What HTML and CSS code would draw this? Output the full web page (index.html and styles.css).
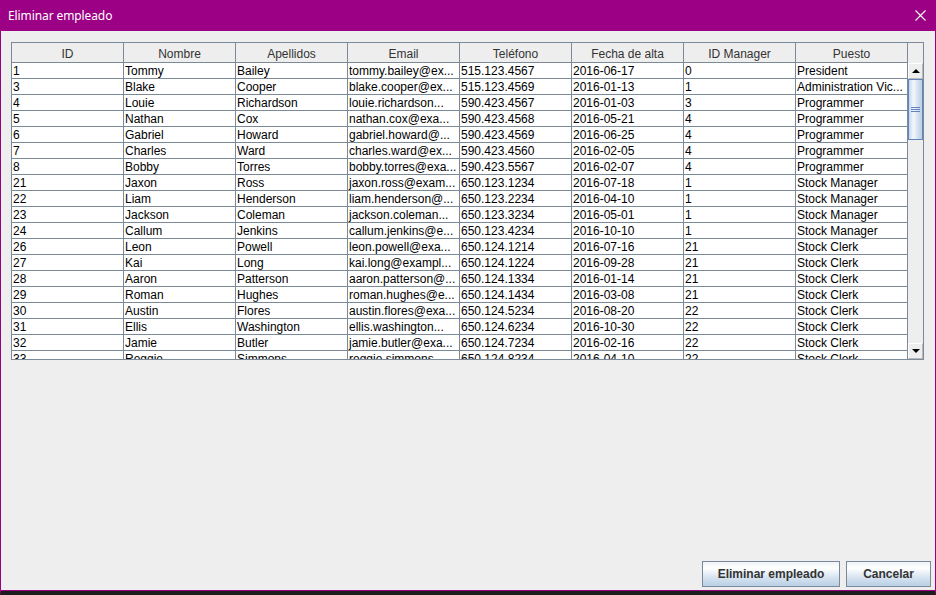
FILE: index.html
```html
<!DOCTYPE html>
<html lang="es">
<head>
<meta charset="utf-8">
<title>Eliminar empleado</title>
<link rel="stylesheet" href="styles.css">
</head>
<body>
<div class="window">
  <div class="titlebar">
    <span class="title">Eliminar empleado</span>
    <svg class="close" width="11" height="11" viewBox="0 0 11 11"><path d="M0.5 0.5 L10.5 10.5 M10.5 0.5 L0.5 10.5" stroke="#fff" stroke-width="1.1" fill="none"/></svg>
  </div>
  <div class="content">
    <div class="pane">
      <div class="pane-head">
        <div class="thead">
          <div class="th">ID</div><div class="th">Nombre</div><div class="th">Apellidos</div><div class="th">Email</div><div class="th">Teléfono</div><div class="th">Fecha de alta</div><div class="th">ID Manager</div><div class="th">Puesto</div>
        </div>
        <div class="corner"></div>
      </div>
      <div class="pane-body">
        <div class="viewport">
          <div class="tbody">
            <div class="td">1</div><div class="td">Tommy</div><div class="td">Bailey</div><div class="td">tommy.bailey@ex...</div><div class="td">515.123.4567</div><div class="td">2016-06-17</div><div class="td">0</div><div class="td">President</div>
            <div class="td">3</div><div class="td">Blake</div><div class="td">Cooper</div><div class="td">blake.cooper@ex...</div><div class="td">515.123.4569</div><div class="td">2016-01-13</div><div class="td">1</div><div class="td">Administration Vic...</div>
            <div class="td">4</div><div class="td">Louie</div><div class="td">Richardson</div><div class="td">louie.richardson...</div><div class="td">590.423.4567</div><div class="td">2016-01-03</div><div class="td">3</div><div class="td">Programmer</div>
            <div class="td">5</div><div class="td">Nathan</div><div class="td">Cox</div><div class="td">nathan.cox@exa...</div><div class="td">590.423.4568</div><div class="td">2016-05-21</div><div class="td">4</div><div class="td">Programmer</div>
            <div class="td">6</div><div class="td">Gabriel</div><div class="td">Howard</div><div class="td">gabriel.howard@...</div><div class="td">590.423.4569</div><div class="td">2016-06-25</div><div class="td">4</div><div class="td">Programmer</div>
            <div class="td">7</div><div class="td">Charles</div><div class="td">Ward</div><div class="td">charles.ward@ex...</div><div class="td">590.423.4560</div><div class="td">2016-02-05</div><div class="td">4</div><div class="td">Programmer</div>
            <div class="td">8</div><div class="td">Bobby</div><div class="td">Torres</div><div class="td">bobby.torres@exa...</div><div class="td">590.423.5567</div><div class="td">2016-02-07</div><div class="td">4</div><div class="td">Programmer</div>
            <div class="td">21</div><div class="td">Jaxon</div><div class="td">Ross</div><div class="td">jaxon.ross@exam...</div><div class="td">650.123.1234</div><div class="td">2016-07-18</div><div class="td">1</div><div class="td">Stock Manager</div>
            <div class="td">22</div><div class="td">Liam</div><div class="td">Henderson</div><div class="td">liam.henderson@...</div><div class="td">650.123.2234</div><div class="td">2016-04-10</div><div class="td">1</div><div class="td">Stock Manager</div>
            <div class="td">23</div><div class="td">Jackson</div><div class="td">Coleman</div><div class="td">jackson.coleman...</div><div class="td">650.123.3234</div><div class="td">2016-05-01</div><div class="td">1</div><div class="td">Stock Manager</div>
            <div class="td">24</div><div class="td">Callum</div><div class="td">Jenkins</div><div class="td">callum.jenkins@e...</div><div class="td">650.123.4234</div><div class="td">2016-10-10</div><div class="td">1</div><div class="td">Stock Manager</div>
            <div class="td">26</div><div class="td">Leon</div><div class="td">Powell</div><div class="td">leon.powell@exa...</div><div class="td">650.124.1214</div><div class="td">2016-07-16</div><div class="td">21</div><div class="td">Stock Clerk</div>
            <div class="td">27</div><div class="td">Kai</div><div class="td">Long</div><div class="td">kai.long@exampl...</div><div class="td">650.124.1224</div><div class="td">2016-09-28</div><div class="td">21</div><div class="td">Stock Clerk</div>
            <div class="td">28</div><div class="td">Aaron</div><div class="td">Patterson</div><div class="td">aaron.patterson@...</div><div class="td">650.124.1334</div><div class="td">2016-01-14</div><div class="td">21</div><div class="td">Stock Clerk</div>
            <div class="td">29</div><div class="td">Roman</div><div class="td">Hughes</div><div class="td">roman.hughes@e...</div><div class="td">650.124.1434</div><div class="td">2016-03-08</div><div class="td">21</div><div class="td">Stock Clerk</div>
            <div class="td">30</div><div class="td">Austin</div><div class="td">Flores</div><div class="td">austin.flores@exa...</div><div class="td">650.124.5234</div><div class="td">2016-08-20</div><div class="td">22</div><div class="td">Stock Clerk</div>
            <div class="td">31</div><div class="td">Ellis</div><div class="td">Washington</div><div class="td">ellis.washington...</div><div class="td">650.124.6234</div><div class="td">2016-10-30</div><div class="td">22</div><div class="td">Stock Clerk</div>
            <div class="td">32</div><div class="td">Jamie</div><div class="td">Butler</div><div class="td">jamie.butler@exa...</div><div class="td">650.124.7234</div><div class="td">2016-02-16</div><div class="td">22</div><div class="td">Stock Clerk</div>
            <div class="td">33</div><div class="td">Reggie</div><div class="td">Simmons</div><div class="td">reggie.simmons...</div><div class="td">650.124.8234</div><div class="td">2016-04-10</div><div class="td">22</div><div class="td">Stock Clerk</div>
          </div>
        </div>
        <div class="vscroll">
          <div class="sb-btn"><span class="tri up"></span></div>
          <div class="track">
            <div class="thumb"><span class="grip"></span></div>
          </div>
          <div class="sb-btn"><span class="tri down"></span></div>
        </div>
      </div>
    </div>
    <div class="actions">
      <button class="btn btn-wide">Eliminar empleado</button>
      <button class="btn btn-cancel">Cancelar</button>
    </div>
  </div>
</div>
</body>
</html>
```

FILE: styles.css
```css
* { box-sizing: border-box; }
html, body { margin: 0; padding: 0; }
body {
  width: 936px;
  height: 595px;
  overflow: hidden;
  background: #eeeeee;
  font-family: "Liberation Sans", Arial, sans-serif;
  font-size: 12px;
  color: #000;
}
.window {
  width: 936px;
  height: 595px;
  display: flex;
  flex-direction: column;
  border-left: 1px solid #9b0085;
  border-right: 1px solid #9b0085;
  border-bottom: 4px solid #1c1c1c;
}
.titlebar {
  height: 31px;
  flex: none;
  background: #9b0085;
  display: flex;
  align-items: center;
  justify-content: space-between;
  padding: 0 10px 1px 8px;
  margin: 0 -1px;
}
.title {
  color: #fff;
  font-family: "Noto Sans", "Open Sans", sans-serif;
  font-size: 12px;
  letter-spacing: -0.1px;
}
.close { display: block; margin-top: 1px; }
.content {
  flex: 1;
  display: flex;
  flex-direction: column;
  justify-content: space-between;
  padding: 11px 4px 4px 10px;
  background: #eeeeee;
  box-shadow: inset 0 -1px 0 #9b0085;
}
.pane {
  width: 913px;
  height: 318px;
  border: 1px solid #7a8a99;
  background: #eeeeee;
  display: flex;
  flex-direction: column;
}
.pane-head { display: flex; height: 20px; flex: none; }
.thead {
  display: grid;
  grid-template-columns: repeat(8, 112px);
}
.th {
  height: 20px;
  border-right: 1px solid #7a8a99;
  border-bottom: 1px solid #7a8a99;
  background: #eeeeee;
  text-align: center;
  line-height: 19px;
  padding-top: 2px;
  color: #333333;
  white-space: nowrap;
  overflow: hidden;
}
.corner {
  width: 15px;
  height: 20px;
  background: #eeeeee;
}
.pane-body { display: flex; height: 296px; }
.viewport {
  width: 896px;
  height: 296px;
  overflow: hidden;
  background: #fff;
}
.tbody {
  display: grid;
  grid-template-columns: repeat(8, 112px);
  grid-auto-rows: 16px;
}
.td {
  border-right: 1px solid #7a8a99;
  border-bottom: 1px solid #7a8a99;
  padding: 1px 0 0 1px;
  line-height: 15px;
  white-space: nowrap;
  overflow: hidden;
  background: #fff;
}
.vscroll {
  width: 15px;
  height: 296px;
  display: flex;
  flex-direction: column;
  background: #eeeeee;
}
.sb-btn {
  height: 16px;
  flex: none;
  display: flex;
  align-items: center;
  justify-content: center;
  background: #eeeeee;
  border: 1px solid #fff;
  border-right-color: #b8b8b8;
  border-bottom-color: #b8b8b8;
}
.tri { width: 0; height: 0; border-left: 4px solid transparent; border-right: 4px solid transparent; }
.tri.up { border-bottom: 4px solid #000; }
.tri.down { border-top: 4px solid #000; }
.track { flex: 1; }
.thumb {
  height: 61px;
  border: 1px solid #6382bf;
  background: linear-gradient(to right, #c5d6ea 0%, #f3f7fb 35%, #d6e3f1 65%, #b8cfe5 100%);
  display: flex;
  align-items: center;
  justify-content: center;
}
.grip {
  width: 9px;
  height: 5px;
  border-top: 1px solid #6382bf;
  border-bottom: 1px solid #6382bf;
  background: linear-gradient(#6382bf, #6382bf) center / 100% 1px no-repeat;
}
.actions {
  display: flex;
  justify-content: flex-end;
  gap: 6px;
}
.btn {
  height: 26px;
  border: 1px solid #7a8a99;
  background: linear-gradient(to bottom, #eef3f9 0%, #ffffff 25%, #dbe6f2 60%, #b8cfe5 100%);
  font-family: "Liberation Sans", Arial, sans-serif;
  font-weight: bold;
  font-size: 12px;
  color: #333333;
  padding: 0;
  margin: 0;
}
.btn-wide { width: 138px; }
.btn-cancel { width: 85px; }
```
